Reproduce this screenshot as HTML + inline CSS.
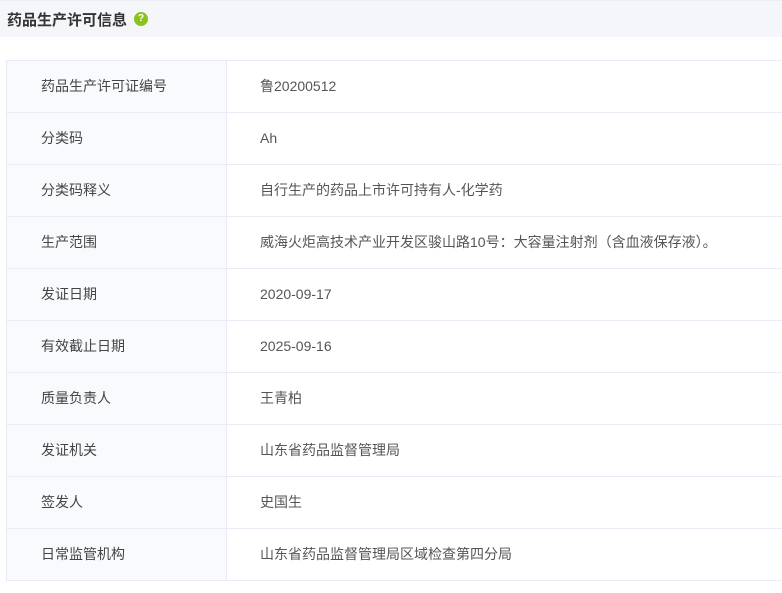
<!DOCTYPE html><html><head><meta charset="utf-8"><style>
body{margin:0;width:782px;height:593px;background:#fff;font-family:"Liberation Sans","Noto Sans CJK SC",sans-serif;overflow:hidden;position:relative}
.hd{position:absolute;left:0;top:0;width:782px;height:37px;background:#f5f6fa;border-top:1px solid #eceef3;box-sizing:border-box}
.hd span{position:absolute;left:7px;top:8px;font-size:15px;font-weight:bold;color:#333}
.q{position:absolute;left:134px;top:11px;width:14px;height:14px;border-radius:50%;background:#8cc21e;color:#fff;font-size:10px;font-weight:bold;text-align:center;line-height:14px}
table{position:absolute;left:6px;top:60px;width:800px;border-collapse:collapse}
tr{height:52px}
td{height:51px;border:1px solid #e9ebf4;font-size:14px;line-height:16px;color:#555;padding:0 0 2px 0;box-sizing:border-box}
td.l{width:220px;background:#f9fafd;padding-left:34px;color:#444}
td.v{padding-left:33px;border-right:none}
</style></head><body>
<div class="hd"><span>药品生产许可信息</span><div class="q">?</div></div>
<table>
<tr><td class="l">药品生产许可证编号</td><td class="v">鲁20200512</td></tr>
<tr><td class="l">分类码</td><td class="v">Ah</td></tr>
<tr><td class="l">分类码释义</td><td class="v">自行生产的药品上市许可持有人-化学药</td></tr>
<tr><td class="l">生产范围</td><td class="v">威海火炬高技术产业开发区骏山路10号：大容量注射剂（含血液保存液）。</td></tr>
<tr><td class="l">发证日期</td><td class="v">2020-09-17</td></tr>
<tr><td class="l">有效截止日期</td><td class="v">2025-09-16</td></tr>
<tr><td class="l">质量负责人</td><td class="v">王青柏</td></tr>
<tr><td class="l">发证机关</td><td class="v">山东省药品监督管理局</td></tr>
<tr><td class="l">签发人</td><td class="v">史国生</td></tr>
<tr><td class="l">日常监管机构</td><td class="v">山东省药品监督管理局区域检查第四分局</td></tr>
</table>
</body></html>
